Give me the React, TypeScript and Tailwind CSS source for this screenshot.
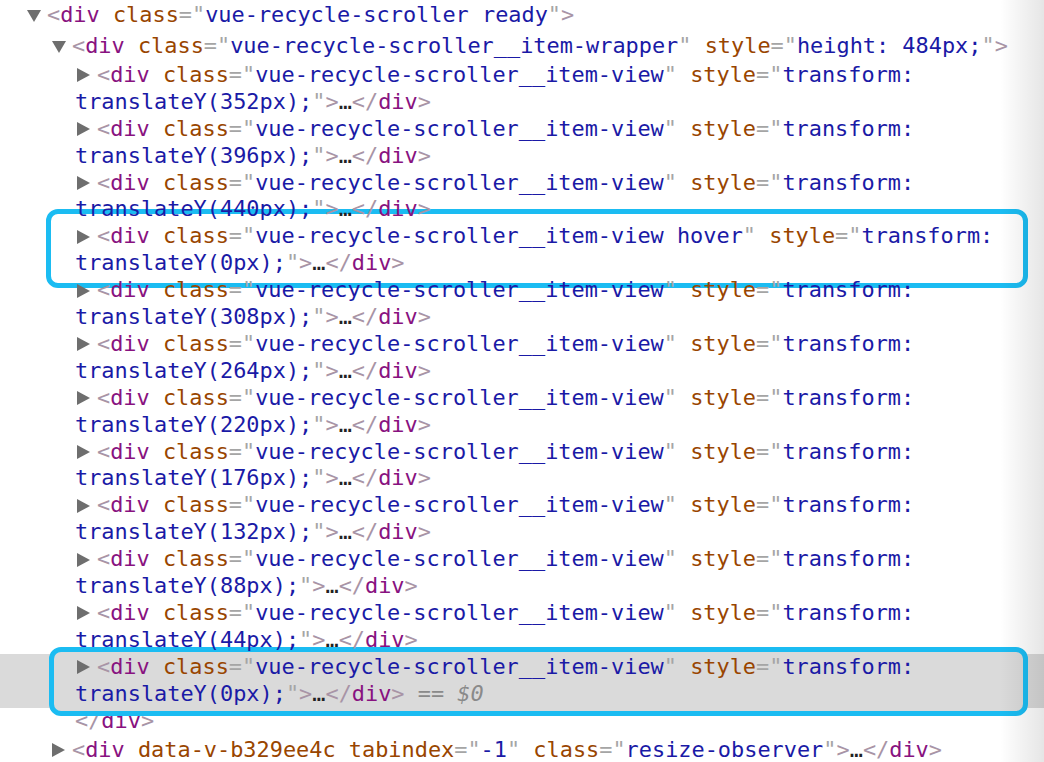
import React from "react";

const tag = "text-[#881280]";
const attr = "text-[#994500]";
const val = "text-[#1a1aa6]";
const br = "text-[#a894a6]";
const eq = "text-[#a5a5a5]";

function Down() {
  return (
    <span className="inline-flex w-[20px] items-center">
      <svg width="14" height="12" viewBox="0 0 14 12">
        <path d="M0 0 L14 0 L7 12 Z" fill="#6e6e6e" />
      </svg>
    </span>
  );
}

function Right() {
  return (
    <span className="inline-flex w-[20px] items-center">
      <svg width="13" height="14" viewBox="0 0 13 14">
        <path d="M0 0 L13 7 L0 14 Z" fill="#6e6e6e" />
      </svg>
    </span>
  );
}

function Attr({ name, value }: { name: string; value?: string }) {
  return (
    <>
      {" "}
      <span className={attr}>{name}</span>
      {value !== undefined && (
        <>
          <span className={eq}>="</span>
          <span className={val}>{value}</span>
          <span className={eq}>"</span>
        </>
      )}
    </>
  );
}

function Open({ name }: { name: string }) {
  return (
    <>
      <span className={br}>&lt;</span>
      <span className={tag}>{name}</span>
    </>
  );
}

function Close() {
  return (
    <>
      <span className={br}>&lt;/</span>
      <span className={tag}>div</span>
      <span className={br}>&gt;</span>
    </>
  );
}

const items = [
  { y: "352px" },
  { y: "396px" },
  { y: "440px" },
  { y: "0px", hover: true },
  { y: "308px" },
  { y: "264px" },
  { y: "220px" },
  { y: "176px" },
  { y: "132px" },
  { y: "88px" },
  { y: "44px" },
  { y: "0px", selected: true },
];

export default function App() {
  return (
    <div
      className="relative w-[1044px] h-[762px] overflow-hidden bg-white pt-[2px] text-[21.9px] leading-[26.9px] whitespace-pre"
      style={{ fontFamily: '"DejaVu Sans Mono", "Liberation Mono", monospace' }}
    >
      <div className="flex items-center pl-[27px] h-[27px]">
        <Down />
        <span>
          <Open name="div" />
          <Attr name="class" value="vue-recycle-scroller ready" />
          <span className={br}>&gt;</span>
        </span>
      </div>
      <div className="flex items-center pl-[52px] h-[27px] mt-[4px]">
        <Down />
        <span>
          <Open name="div" />
          <Attr name="class" value="vue-recycle-scroller__item-wrapper" />
          <Attr name="style" value="height: 484px;" />
          <span className={br}>&gt;</span>
        </span>
      </div>

      <div className="mt-[2px]">
        {items.map((item, index) => (
          <div
            key={index}
            className={`relative h-[53.8px] ${item.selected ? "bg-[#dadada]" : ""}`}
          >
            {item.hover && (
              <span className="absolute left-[46px] right-[16px] -top-[14px] -bottom-[11px] rounded-[12px] border-[5px] border-[#1bbcf2] bg-white z-10" />
            )}
            {item.selected && (
              <span className="absolute left-[49px] right-[16px] -top-[7px] -bottom-[8px] rounded-[12px] border-[5px] border-[#1bbcf2] bg-[#dadada] z-10" />
            )}
            <div className="relative z-20">
              <div className="flex items-center pl-[77px] h-[26.9px]">
                <Right />
                <span>
                  <Open name="div" />
                  <Attr
                    name="class"
                    value={
                      item.hover
                        ? "vue-recycle-scroller__item-view hover"
                        : "vue-recycle-scroller__item-view"
                    }
                  />
                  {" "}
                  <span className={attr}>style</span>
                  <span className={eq}>="</span>
                  <span className={val}>transform:</span>
                </span>
              </div>
              <div className="pl-[75px] h-[26.9px]">
                <span className={val}>translateY({item.y});</span>
                <span className={eq}>"</span>
                <span className={br}>&gt;</span>
                <span className="text-[#222]">…</span>
                <Close />
                {item.selected && (
                  <span className="text-[#8a8a8a]">
                    {" == "}
                    <span className="italic">$0</span>
                  </span>
                )}
              </div>
            </div>
          </div>
        ))}
      </div>

      <div className="pl-[75px] h-[27px]">
        <Close />
      </div>
      <div className="flex items-center pl-[52px] h-[27px] mt-[2px]">
        <Right />
        <span>
          <Open name="div" />
          <Attr name="data-v-b329ee4c" />
          <Attr name="tabindex" value="-1" />
          <Attr name="class" value="resize-observer" />
          <span className={br}>&gt;</span>
          <span className="text-[#222]">…</span>
          <Close />
        </span>
      </div>

      <div className="pointer-events-none absolute top-0 right-0 h-full w-[44px] bg-gradient-to-r from-transparent to-black/10 z-30" />
    </div>
  );
}
